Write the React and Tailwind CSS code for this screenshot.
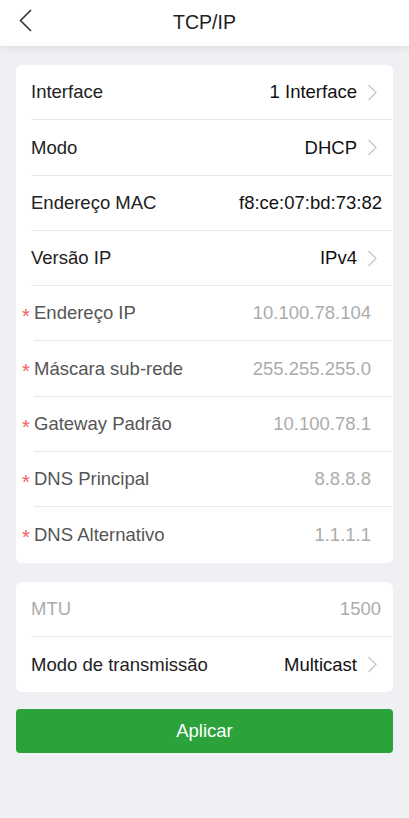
function Chevron() {
  return (
    <svg width="11" height="17" viewBox="0 0 11 17" className="ml-[10px] shrink-0">
      <path d="M1.5 1 L9 8.5 L1.5 16" fill="none" stroke="#c8c8c8" strokeWidth="1.3" />
    </svg>
  );
}

function BackArrow() {
  return (
    <svg width="14" height="24" viewBox="0 0 14 24" className="absolute left-[19px] top-[9px]">
      <path d="M12 1 L1.5 11.5 L12 22" fill="none" stroke="#333" strokeWidth="1.6" />
    </svg>
  );
}

function Row({ label, value, arrow, required, muted, mutedLabel, last, pr }) {
  return (
    <div className={`flex h-[55.3px] items-stretch ${required ? "pl-[6px]" : "pl-[15px]"}`}>
      {required && <span className="w-[12px] pt-[20px] text-[20px] leading-none text-[#f4605c]">*</span>}
      <div
        className={`flex flex-1 items-center justify-between ${pr} ${last ? "" : "border-b border-[#e9e9ec]"}`}
      >
        <span className={mutedLabel ? "text-[#acacac]" : required ? "text-[#555]" : "text-[#222]"}>{label}</span>
        <span className="flex items-center">
          <span className={muted ? "text-[#acacac]" : "text-[#111]"}>{value}</span>
          {arrow && <Chevron />}
        </span>
      </div>
    </div>
  );
}

export default function App() {
  const rows = [
    { label: "Interface", value: "1 Interface", arrow: true, pr: "pr-[15px]" },
    { label: "Modo", value: "DHCP", arrow: true, pr: "pr-[15px]" },
    { label: "Endereço MAC", value: "f8:ce:07:bd:73:82", pr: "pr-[11px]" },
    { label: "Versão IP", value: "IPv4", arrow: true, pr: "pr-[15px]" },
    { label: "Endereço IP", value: "10.100.78.104", required: true, muted: true, pr: "pr-[22px]" },
    { label: "Máscara sub-rede", value: "255.255.255.0", required: true, muted: true, pr: "pr-[22px]" },
    { label: "Gateway Padrão", value: "10.100.78.1", required: true, muted: true, pr: "pr-[22px]" },
    { label: "DNS Principal", value: "8.8.8.8", required: true, muted: true, pr: "pr-[22px]" },
    { label: "DNS Alternativo", value: "1.1.1.1", required: true, muted: true, pr: "pr-[22px]", last: true },
  ];

  return (
    <div
      className="min-h-[818px] bg-[#eff0f4] text-[18.5px]"
      style={{ fontFamily: '"Liberation Sans", Arial, sans-serif' }}
    >
      <header className="relative flex h-[46px] items-center justify-center bg-white shadow-[0_2px_8px_rgba(0,0,0,0.08)]">
        <BackArrow />
        <h1 className="text-[19.5px] text-[#222]">TCP/IP</h1>
      </header>

      <div className="px-4 pt-[19px]">
        <div className="overflow-hidden rounded-[6px] bg-white">
          {rows.map((r) => (
            <Row key={r.label} {...r} />
          ))}
        </div>

        <div className="mt-[19px] overflow-hidden rounded-[6px] bg-white">
          <Row label="MTU" value="1500" muted mutedLabel pr="pr-[12px]" />
          <Row label="Modo de transmissão" value="Multicast" arrow pr="pr-[15px]" last />
        </div>

        <button className="mt-[17px] flex h-[44px] w-full items-center justify-center rounded-[4px] bg-[#2ca23b] text-[18.5px] text-white">
          Aplicar
        </button>
      </div>
    </div>
  );
}
